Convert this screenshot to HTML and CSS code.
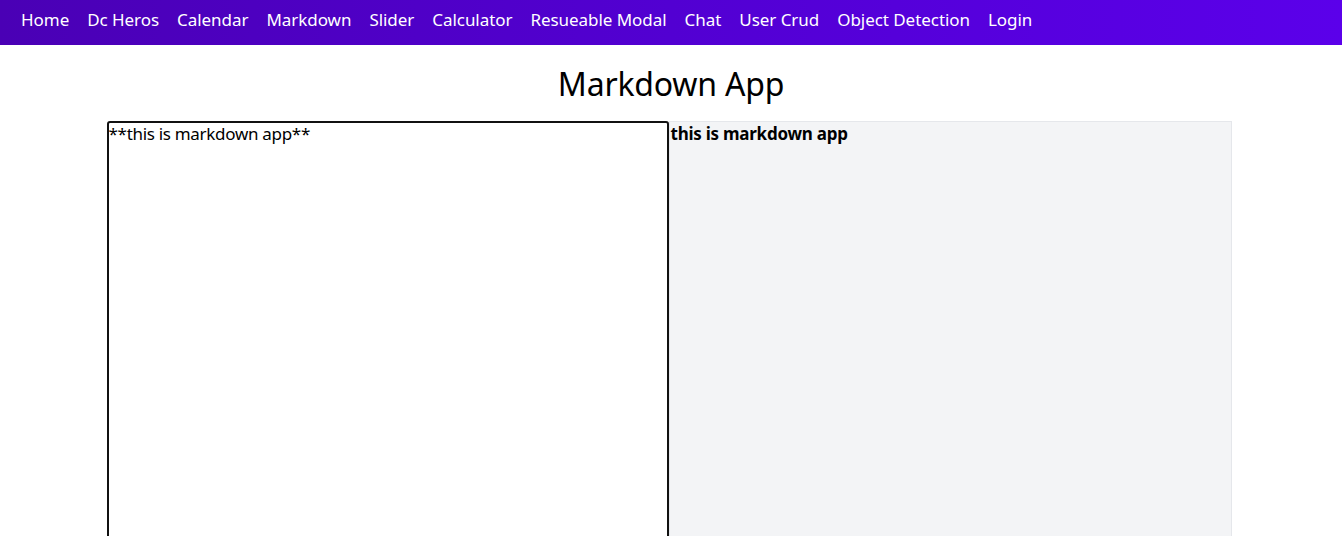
FILE: index.html
```html
<!DOCTYPE html>
<html lang="en">
<head>
<meta charset="utf-8">
<title>Markdown App</title>
<link rel="stylesheet" href="styles.css">
</head>
<body>
<nav class="navbar">
  <a class="nav-link" href="#">Home</a>
  <a class="nav-link" href="#">Dc Heros</a>
  <a class="nav-link" href="#">Calendar</a>
  <a class="nav-link" href="#">Markdown</a>
  <a class="nav-link" href="#">Slider</a>
  <a class="nav-link" href="#">Calculator</a>
  <a class="nav-link" href="#">Resueable Modal</a>
  <a class="nav-link" href="#">Chat</a>
  <a class="nav-link" href="#">User Crud</a>
  <a class="nav-link" href="#">Object Detection</a>
  <a class="nav-link" href="#">Login</a>
</nav>
<main class="page">
  <h1 class="title">Markdown App</h1>
  <div class="editor">
    <textarea class="input" spellcheck="false">**this is markdown app**</textarea>
    <div class="preview"><p><strong>this is markdown app</strong></p></div>
  </div>
</main>
</body>
</html>
```
FILE: styles.css
```css
* { box-sizing: border-box; }
html, body { margin: 0; padding: 0; }
body {
  font-family: "Noto Sans", "Open Sans", sans-serif;
  color: #000;
  background: #fff;
  overflow: hidden;
}
.navbar {
  display: flex;
  align-items: center;
  height: 45px;
  padding: 0 0 6px 21px;
  gap: 18px;
  background: linear-gradient(90deg, #4a00b5 0%, #5200d2 50%, #5b00ea 100%);
}
.nav-link {
  color: #fff;
  text-decoration: none;
  font-size: 17px;
  letter-spacing: -0.05px;
}
.page {
  display: flex;
  flex-direction: column;
  align-items: center;
}
.title {
  margin: 19px 0 17px;
  font-size: 32px;
  font-weight: 400;
  line-height: 40px;
  letter-spacing: -0.2px;
}
.editor {
  display: flex;
  width: 1125px;
  margin-left: -4px;
}
.input {
  width: 562px;
  height: 480px;
  margin: 0;
  padding: 0;
  border: 2px solid #111;
  border-radius: 3px;
  resize: none;
  outline: none;
  font-family: "Noto Sans", "Open Sans", sans-serif;
  font-size: 17px;
  line-height: 22px;
  letter-spacing: -0.3px;
  color: #000;
}
.preview {
  width: 563px;
  height: 480px;
  background: #f3f4f6;
  border: 1px solid #e5e7eb;
  padding: 0 1px;
}
.preview p {
  margin: 0;
  padding-top: 1px;
  font-size: 17px;
  line-height: 22px;
  letter-spacing: -0.25px;
}
.preview strong { font-weight: 700; }
```
